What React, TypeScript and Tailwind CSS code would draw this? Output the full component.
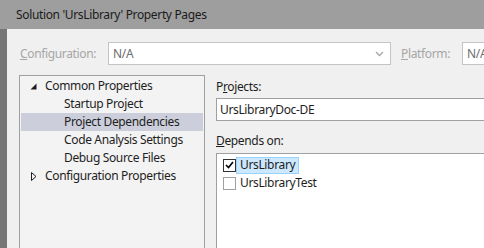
import React from "react";

const font = { fontFamily: '"Noto Sans", "Open Sans", sans-serif' };

function Chevron() {
  return (
    <svg width="9" height="6" viewBox="0 0 9 6" className="shrink-0">
      <path d="M1 1 L4.5 4.5 L8 1" fill="none" stroke="#a6a6a6" strokeWidth="1.3" />
    </svg>
  );
}

function Combo({ value, className }: { value: string; className: string }) {
  return (
    <div className={`h-[23px] border border-[#c4c4c4] bg-white flex items-center pl-[4px] pr-[6px] ${className}`}>
      <span className="flex-1 text-[#6d6d6d]">{value}</span>
      <Chevron />
    </div>
  );
}

type TreeRow = { label: string; level: number; expanded?: boolean; selected?: boolean };

const rows: TreeRow[] = [
  { label: "Common Properties", level: 0, expanded: true },
  { label: "Startup Project", level: 1 },
  { label: "Project Dependencies", level: 1, selected: true },
  { label: "Code Analysis Settings", level: 1 },
  { label: "Debug Source Files", level: 1 },
  { label: "Configuration Properties", level: 0, expanded: false },
];

function Arrow({ expanded }: { expanded?: boolean }) {
  if (expanded) {
    return (
      <svg width="7" height="7" viewBox="0 0 7 7">
        <path d="M6.5 0.5 L6.5 6.5 L0.5 6.5 Z" fill="#1e1e1e" />
      </svg>
    );
  }
  return (
    <svg width="6" height="9" viewBox="0 0 6 9">
      <path d="M0.5 0.5 L5 4.5 L0.5 8.5 Z" fill="none" stroke="#1e1e1e" strokeWidth="1" />
    </svg>
  );
}

export default function App() {
  return (
    <div className="w-[484px] h-[248px] overflow-hidden flex flex-col text-[12px] tracking-[-0.35px] text-[#1e1e1e]" style={font}>
      <div className="h-[29px] shrink-0 bg-[#9e9e9e] flex items-center pl-[16px] text-[#1b1b1b]">
        Solution 'UrsLibrary' Property Pages
      </div>
      <div className="flex-1 flex min-h-0">
        <div className="w-[7px] shrink-0 bg-[#767676]" />
        <div className="flex-1 bg-[#f0f0f0] pl-[12px] pt-[13px] overflow-hidden">
          <div className="flex items-center h-[23px] whitespace-nowrap">
            <span className="w-[88px] ml-[1px] shrink-0 text-[#a6a6a6]">
              <span className="underline">C</span>onfiguration:
            </span>
            <Combo value="N/A" className="w-[283px] shrink-0" />
            <span className="ml-[10px] w-[61px] shrink-0 text-[#a6a6a6]">
              <span className="underline">P</span>latform:
            </span>
            <Combo value="N/A" className="w-[80px] shrink-0" />
          </div>

          <div className="flex mt-[10px] gap-[11px]">
            <div className="w-[186px] h-[200px] shrink-0 border border-[#a0a0a0] bg-[#f3f3f3] pt-[1px]">
              {rows.map((r) => (
                <div
                  key={r.label}
                  className={`h-[18px] mx-[1px] flex items-center whitespace-nowrap ${r.selected ? "bg-[#cccedb]" : ""}`}
                >
                  {r.level === 0 ? (
                    <>
                      <span className="w-[24px] shrink-0 flex justify-end pr-[8px]">
                        <Arrow expanded={r.expanded} />
                      </span>
                      <span>{r.label}</span>
                    </>
                  ) : (
                    <span className="pl-[43px]">{r.label}</span>
                  )}
                </div>
              ))}
            </div>

            <div className="w-[300px] shrink-0 pt-[4px]">
              <div className="h-[16px] leading-[16px]">
                P<span className="underline">r</span>ojects:
              </div>
              <div className="mt-[3px] h-[23px] border border-[#a0a0a0] bg-white flex items-center pl-[3px]">
                UrsLibraryDoc-DE
              </div>
              <div className="mt-[12px] h-[16px] leading-[16px]">
                <span className="underline">D</span>epends on:
              </div>
              <div className="mt-[4px] h-[120px] border border-[#a0a0a0] bg-white pt-[2px] pl-[6px]">
                <div className="h-[18px] flex items-center">
                  <span className="w-[13px] h-[13px] border border-[#333] bg-white flex items-center justify-center">
                    <svg width="9" height="8" viewBox="0 0 9 8">
                      <path d="M1 4 L3.5 6.5 L8 1" fill="none" stroke="#000" strokeWidth="1.6" />
                    </svg>
                  </span>
                  <span className="h-[17px] flex items-center px-[3px] bg-[#cce8ff] border border-[#99d1ff]">
                    UrsLibrary
                  </span>
                </div>
                <div className="h-[18px] flex items-center">
                  <span className="w-[13px] h-[13px] border border-[#a0a0a0] bg-white" />
                  <span className="ml-[3px] px-[1px]">UrsLibraryTest</span>
                </div>
              </div>
            </div>
          </div>
        </div>
      </div>
    </div>
  );
}
